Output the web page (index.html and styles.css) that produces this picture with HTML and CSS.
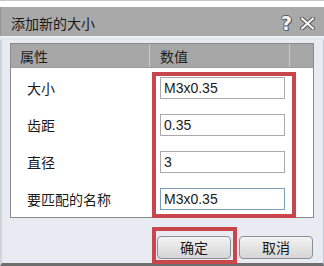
FILE: index.html
```html
<!DOCTYPE html>
<html lang="zh">
<head>
<meta charset="utf-8">
<title>添加新的大小</title>
<link rel="stylesheet" href="styles.css">
</head>
<body>
<div class="window">
  <div class="topstrip"></div>
  <div class="titlebar">
    <span class="title">添加新的大小</span>
    <span class="tb-icons">
      <span class="help">?</span>
      <svg class="close" width="15" height="13" viewBox="0 0 15 13">
        <path d="M2 1.5 L13 11.5 M13 1.5 L2 11.5" stroke="#5a5a5a" stroke-width="4.2" stroke-linecap="round"/>
        <path d="M2 1.5 L13 11.5 M13 1.5 L2 11.5" stroke="#f4f4f4" stroke-width="2.2" stroke-linecap="round"/>
      </svg>
    </span>
  </div>
  <div class="sep"></div>
  <div class="panel">
    <div class="grid">
      <div class="thead">
        <div class="th c1">属性</div>
        <div class="th c2">数值</div>
        <div class="th c3"></div>
      </div>
      <div class="tbody">
        <div class="row"><div class="label">大小</div><div class="val"><div class="field">M3x0.35</div></div></div>
        <div class="row"><div class="label">齿距</div><div class="val"><div class="field">0.35</div></div></div>
        <div class="row"><div class="label">直径</div><div class="val"><div class="field">3</div></div></div>
        <div class="row"><div class="label">要匹配的名称</div><div class="val"><div class="field focus">M3x0.35</div></div></div>
      </div>
    </div>
    <div class="buttons">
      <div class="btn">确定</div>
      <div class="btn">取消</div>
    </div>
  </div>
  <div class="mark mark-fields"></div>
  <div class="mark mark-ok"></div>
</div>
</body>
</html>
```

FILE: styles.css
```css
* { box-sizing: border-box; }
html, body {
  margin: 0;
  padding: 0;
  background: #ffffff;
}
body {
  width: 324px;
  height: 266px;
  overflow: hidden;
  font-family: "Noto Sans CJK SC", "Noto Sans", sans-serif;
  color: #1b1b1b;
}
.window {
  position: relative;
  width: 324px;
  height: 266px;
  display: flex;
  flex-direction: column;
}
.topstrip {
  height: 7px;
  background: #ffffff;
  border-top: 1px solid #c8c8c8;
}
.titlebar {
  height: 29px;
  background: #a9a9a9;
  display: flex;
  align-items: center;
  justify-content: space-between;
  padding: 3px 9px 0 10px;
  border-left: 1px solid #959595;
}
.title {
  font-size: 14px;
  line-height: 16px;
  color: #1a1a1a;
}
.tb-icons {
  display: flex;
  align-items: center;
  gap: 8px;
}
.help {
  font-family: "DejaVu Sans", sans-serif;
  font-weight: bold;
  font-size: 19px;
  line-height: 19px;
  color: #f4f4f4;
  text-shadow: -1px 0 0 #5a5a5a, 1px 0 0 #5a5a5a, 0 -1px 0 #5a5a5a, 0 1px 0 #5a5a5a, 1px 1px 0 #5a5a5a;
}
.close { display: block; margin-top: 1px; }
.sep {
  height: 4px;
  background: linear-gradient(#f2f4f9, #dde2ec);
}
.panel {
  flex: 1;
  background: #e8ebf1;
  border-left: 2px solid #d0d4dc;
  border-right: 1px solid #c4c8d0;
  border-bottom: 3px solid #6e6e6e;
  padding: 3px 0 0 8px;
}
.grid {
  width: 304px;
  height: 175px;
  border: 1px solid #8a8a8a;
  background: #ffffff;
  display: flex;
  flex-direction: column;
}
.thead {
  height: 24px;
  display: flex;
  background: #a7a7a7;
  border-bottom: 1px solid #9a9a9a;
}
.th {
  font-size: 14px;
  line-height: 24px;
  color: #1e1e1e;
  border-right: 1px solid #cacaca;
}
.th.c1 { width: 139px; padding-left: 9px; }
.th.c2 { width: 140px; padding-left: 10px; }
.th.c3 { flex: 1; border-right: none; }
.tbody {
  flex: 1;
  padding-top: 1px;
  display: flex;
  flex-direction: column;
}
.row {
  height: 37px;
  display: flex;
  align-items: center;
}
.label {
  width: 139px;
  padding-left: 16px;
  font-size: 14px;
  line-height: 16px;
}
.val {
  width: 140px;
  padding-left: 10px;
}
.field {
  width: 125px;
  height: 22px;
  border: 1px solid #a9a9a9;
  background: #ffffff;
  font-family: "Liberation Sans", sans-serif;
  font-size: 14px;
  line-height: 20px;
  padding-left: 3px;
  color: #1a1a1a;
}
.field.focus { border-color: #7d9fb5; }
.buttons {
  display: flex;
  gap: 8px;
  padding-left: 147px;
  margin-top: 18px;
}
.btn {
  width: 74px;
  height: 23px;
  border: 1px solid #8e8e8e;
  border-radius: 4px;
  background: linear-gradient(#f4f4f4, #e4e4e4 50%, #d6d6d6);
  font-size: 14px;
  line-height: 21px;
  text-align: center;
  color: #1a1a1a;
}
.mark {
  position: absolute;
  border: 4px solid #c9474c;
}
.mark-fields {
  left: 152px;
  top: 72px;
  width: 144px;
  height: 146px;
}
.mark-ok {
  left: 152px;
  top: 227px;
  width: 85px;
  height: 37px;
}
```
